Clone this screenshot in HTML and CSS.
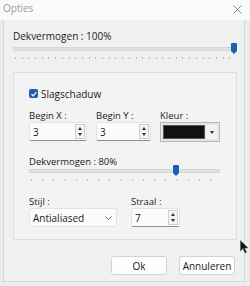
FILE: index.html
```html
<!DOCTYPE html>
<html>
<head>
<meta charset="utf-8">
<link rel="stylesheet" href="styles.css">
</head>
<body>
<div class="win">
  <div class="titlebar">
    <span class="title">Opties</span>
    <svg class="close" width="9" height="9" viewBox="0 0 9 9"><path d="M0.5 0.5L8.5 8.5M8.5 0.5L0.5 8.5" stroke="#8a8a8a" stroke-width="1"/></svg>
  </div>
  <div class="frame">
    <div class="lbl top">Dekvermogen : 100%</div>
    <div class="slider s1">
      <div class="track"></div>
      <svg class="thumb" style="left:218px" width="6" height="11" viewBox="0 0 6 11"><path d="M1 0H5Q6 0 6 1V8L3 11L0 8V1Q0 0 1 0Z" fill="#1c5fb5"/></svg>
      <div class="ticks t1"></div>
    </div>
    <div class="group">
      <label class="check"><span class="box"><svg width="8" height="8" viewBox="0 0 8 8"><path d="M1.5 4.2L3.2 5.8L6.5 2.2" fill="none" stroke="#fff" stroke-width="1.2"/></svg></span>Slagschaduw</label>
      <div class="row">
        <div class="field">
          <div class="lbl">Begin X :</div>
          <div class="input w58"><span>3</span><span class="spin"><i class="up"></i><i class="dn"></i></span></div>
        </div>
        <div class="field">
          <div class="lbl">Begin Y :</div>
          <div class="input w55"><span>3</span><span class="spin"><i class="up"></i><i class="dn"></i></span></div>
        </div>
        <div class="field">
          <div class="lbl">Kleur :</div>
          <div class="color"><span class="swatch"></span><span class="carrow"><i class="dn"></i></span></div>
        </div>
      </div>
      <div class="lbl op">Dekvermogen : 80%</div>
      <div class="slider s2">
        <div class="track"></div>
        <svg class="thumb" style="left:144px" width="6" height="11" viewBox="0 0 6 11"><path d="M1 0H5Q6 0 6 1V8L3 11L0 8V1Q0 0 1 0Z" fill="#1c5fb5"/></svg>
        <div class="ticks t2"></div>
      </div>
      <div class="row r2">
        <div class="field">
          <div class="lbl">Stijl :</div>
          <div class="input select"><span>Antialiased</span><svg width="7" height="4" viewBox="0 0 7 4"><path d="M0.5 0.5L3.5 3.5L6.5 0.5" fill="none" stroke="#666" stroke-width="0.9"/></svg></div>
        </div>
        <div class="field">
          <div class="lbl">Straal :</div>
          <div class="input w49"><span>7</span><span class="spin"><i class="up"></i><i class="dn"></i></span></div>
        </div>
      </div>
    </div>
    <div class="buttons">
      <button class="btn">Ok</button>
      <button class="btn">Annuleren</button>
    </div>
  </div>
  <svg class="cursor" width="9" height="14" viewBox="0 0 9 14"><path d="M0.5 0.5V11L3 8.5L5 13L6.5 12.3L4.6 8H8Z" fill="#111" stroke="#555" stroke-width="0.5"/></svg>
</div>
</body>
</html>
```
FILE: styles.css
```css
* { box-sizing: border-box; }
html, body { margin: 0; padding: 0; }
body {
  width: 250px;
  height: 286px;
  background: #ececec;
  font-family: "Open Sans", "Noto Sans", sans-serif;
  font-size: 9.5px;
  color: #1b1b1b;
  overflow: hidden;
}
.win { position: relative; width: 250px; height: 286px; }
.titlebar {
  height: 20px;
  background: #fafafa;
  display: flex;
  align-items: center;
  justify-content: space-between;
  padding: 0 8px 0 3px;
}
.title { color: #9a9a9a; font-size: 10px; margin-top: -4px; }
.close { margin-top: -2px; }
.frame {
  margin: 0 5px 0 3px;
  height: 262px;
  background: #f0f0f0;
  border-left: 1px solid #d4d4d4;
  border-right: 1px solid #d8d8d8;
  border-bottom: 1px solid #d8d8d8;
  padding: 10px 6px 0 9px;
}
.lbl { line-height: 13px; height: 13px; white-space: nowrap; }
.lbl.top { font-size: 10px; }
.slider { position: relative; height: 18px; }
.slider .track {
  position: absolute; left: 0; right: 0; top: 4px; height: 4px;
  background: #e2e2e2; border: 1px solid #d6d6d6;
}
.s1 .track { right: 2px; }
.thumb { position: absolute; top: 0; }
.ticks { position: absolute; left: 2px; right: 2px; top: 14px; height: 2px; }
.t1 { background: repeating-linear-gradient(90deg, #b9b9b9 0 1px, transparent 1px 6.7px); }
.t2 { background: repeating-linear-gradient(90deg, #b9b9b9 0 1px, transparent 1px 11.2px); right: 6px; }
.group {
  margin-top: 11px;
  width: 224px;
  height: 168px;
  background: #f3f3f3;
  border: 1px solid #dedede;
  padding: 15px 0 0 15px;
}
.check { display: flex; align-items: center; gap: 3px; font-size: 10px; height: 11px; }
.box {
  width: 9px; height: 9px; background: #1c5fb5; border-radius: 2px;
  display: flex; align-items: center; justify-content: center;
}
.box svg { width: 8px; height: 8px; }
.row { display: flex; gap: 9px; margin-top: 10px; }
.row .lbl { margin-bottom: -1px; }
.input {
  height: 19px;
  margin-top: 1px;
  background: #fbfbfb;
  border: 1px solid #e3e3e3;
  border-bottom-color: #8c8c8c;
  border-radius: 2px;
  display: flex; align-items: center; justify-content: space-between;
  padding-left: 3px;
  font-size: 10px;
}
.w58 { width: 58px; }
.w55 { width: 55px; }
.w49 { width: 49px; }
.spin {
  width: 10px; height: 15px; margin-right: 1px;
  display: flex; flex-direction: column; justify-content: space-between; align-items: center;
  border: 1px solid #cfcfcf; background: #f4f4f4; padding: 2px 0;
}
i { display: block; width: 0; height: 0; }
.up { border-left: 2.5px solid transparent; border-right: 2.5px solid transparent; border-bottom: 3px solid #333; }
.dn { border-left: 2.5px solid transparent; border-right: 2.5px solid transparent; border-top: 3px solid #333; }
.color {
  width: 60px; height: 20px; margin-top: 1px;
  border: 1px solid #b8b8b8; background: #e6e6e6;
  display: flex; align-items: center; padding: 2px;
}
.swatch { width: 42px; height: 14px; background: #111; border: 1px solid #555; }
.carrow { flex: 1; height: 14px; display: flex; align-items: center; justify-content: center; background: #f2f2f2; margin-left: 1px; }
.op { margin-top: 13px; }
.s2 { width: 191px; margin-top: -3px; }
.r2 { margin-top: 12px; gap: 14px; }
.select { width: 88px; padding-right: 4px; border-bottom-color: #e3e3e3; }
.buttons { display: flex; justify-content: flex-end; gap: 12px; margin-top: 16px; padding-right: 3px; }
.btn {
  font-family: inherit; font-size: 10px; color: #1b1b1b;
  width: 56px; height: 19px; background: #fdfdfd; border: 1px solid #d3d3d3; border-radius: 3px;
  padding: 0;
}
.cursor { position: absolute; left: 240px; top: 240px; }
```
